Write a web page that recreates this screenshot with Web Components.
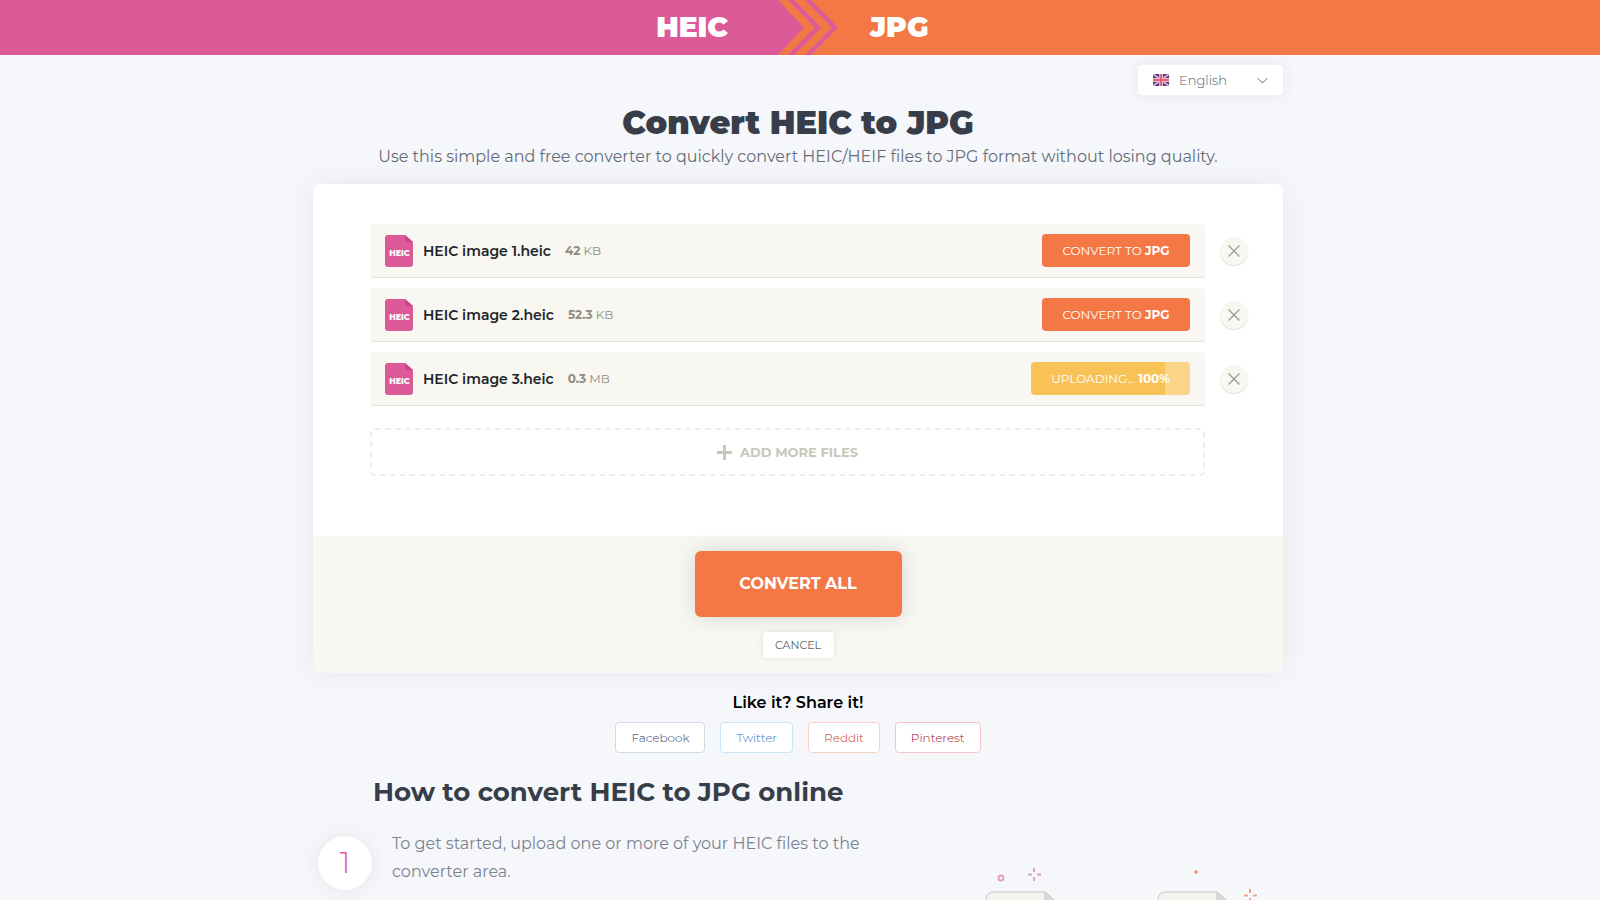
<!DOCTYPE html>
<html lang="en">
<head>
<meta charset="utf-8">
<meta name="viewport" content="width=device-width, initial-scale=1">
<title>Convert HEIC to JPG</title>
<style>
  html {
    background: #f5f7fb;
    overflow: hidden;
  }
  body {
    margin: 0;
    font-family: Montserrat, Inter, sans-serif;
    font-size: 16px;
    color: #373e4a;
  }
</style>
</head>
<body>
<format-banner>
  <span slot="from">HEIC</span>
  <span slot="to">JPG</span>
</format-banner>

<page-column>
  <language-picker></language-picker>
  <page-intro>
    <span slot="title">Convert HEIC to JPG</span>
    <span slot="text">Use this simple and free converter to quickly convert HEIC/HEIF files to JPG format without losing quality.</span>
  </page-intro>
  <converter-card>
    <file-row name="HEIC image 1.heic" size="42" unit="KB"></file-row>
    <file-row name="HEIC image 2.heic" size="52.3" unit="KB"></file-row>
    <file-row name="HEIC image 3.heic" size="0.3" unit="MB" progress="100"></file-row>
  </converter-card>
  <share-links></share-links>
  <how-to>
    <span slot="title">How to convert HEIC to JPG online</span>
    <how-step number="1">To get started, upload one or more of your HEIC files to the converter area.</how-step>
    <file-drawing slot="picture"></file-drawing>
  </how-to>
</page-column>

<script>
// Creates the shadow root and fills it
function render(element, html) {
  const root = element.attachShadow({ mode: "open" });
  const template = document.createElement("template");
  template.innerHTML = html;
  root.appendChild(template.content.cloneNode(true));
  return root;
}

class FormatBanner extends HTMLElement {
  constructor() {
    super();
    render(this, `
      <style>
        :host {
          display: grid;
          grid-template-columns: 1fr 60px 1fr;
          height: 55px;
          background: linear-gradient(90deg, #dd5a99 50%, #f47846 50%);
          color: #fff;
          font-size: 28px;
          font-weight: 900;
          line-height: 55px;
        }
        .from { padding-right: 42px; text-align: right; }
        .to { padding-left: 40px; }
        svg { display: block; overflow: visible; }
      </style>
      <div class="from"><slot name="from"></slot></div>
      <svg width="60" height="55" viewBox="0 0 60 55" aria-hidden="true">
        <rect width="60" height="55" fill="#f47846"/>
        <path d="M0 0H8L34 27.500L8 55H0Z" fill="#dd5a99"/>
        <path d="M18 0H24L51 27.500L24 55H18L45 27.500Z" fill="#dd5a99"/>
        <path d="M35 0H41L68 27.500L41 55H35L62 27.500Z" fill="#dd5a99"/>
      </svg>
      <div class="to"><slot name="to"></slot></div>
    `);
  }
}
customElements.define("format-banner", FormatBanner);

class PageColumn extends HTMLElement {
  constructor() {
    super();
    render(this, `
      <style>
        :host {
          display: block;
          max-width: 970px;
          margin: 0 auto;
          padding: 10px 4px 0 0;
        }
      </style>
      <slot></slot>
    `);
  }
}
customElements.define("page-column", PageColumn);

class LanguagePicker extends HTMLElement {
  constructor() {
    super();
    render(this, `
      <style>
        :host { display: flex; justify-content: flex-end; }
        label {
          display: flex;
          align-items: center;
          box-sizing: border-box;
          width: 145px;
          height: 30px;
          padding: 0 15px;
          border-radius: 4px;
          background: #fff;
          box-shadow: 0 0 15px rgba(50, 50, 60, .09);
        }
        select {
          flex: 1;
          min-width: 0;
          height: 30px;
          padding: 0 0 0 10px;
          border: 0;
          outline: 0;
          appearance: none;
          background: none;
          color: #525b70;
          font: 300 13px Montserrat, Inter, sans-serif;
        }
      </style>
      <label>
        <svg width="16" height="12" viewBox="0 0 16 12" aria-hidden="true">
          <rect width="16" height="12" fill="#3d3f86"/>
          <path d="M0 0L16 12M16 0L0 12" stroke="#dba6c0" stroke-width="2"/>
          <path d="M8 0V12M0 6H16" stroke="#eab4c6" stroke-width="4"/>
          <path d="M8 0V12M0 6H16" stroke="#e0667a" stroke-width="2"/>
        </svg>
        <select aria-label="Language"><option>English</option></select>
        <svg width="11" height="7" viewBox="0 0 11 7" fill="none" stroke="#5f687b" aria-hidden="true">
          <path d="M.5 1L5.500 6L10.500 1"/>
        </svg>
      </label>
    `);
  }
}
customElements.define("language-picker", LanguagePicker);

class PageIntro extends HTMLElement {
  constructor() {
    super();
    render(this, `
      <style>
        :host { display: block; padding: 8px 0 13px; text-align: center; }
        h1 { margin: 0; font-size: 32px; font-weight: 900; line-height: 40px; }
        p { margin: 0; color: #666d79; font-weight: 400; line-height: 28px; }
      </style>
      <h1><slot name="title"></slot></h1>
      <p><slot name="text"></slot></p>
    `);
  }
}
customElements.define("page-intro", PageIntro);

class ConverterCard extends HTMLElement {
  constructor() {
    super();
    render(this, `
      <style>
        :host {
          display: block;
          overflow: hidden;
          border-radius: 8px;
          background: #fff;
          box-shadow: 0 0 30px rgba(50, 50, 60, .08);
        }
        .files {
          display: flex;
          flex-direction: column;
          gap: 10px;
          padding: 40px 35px 60px 57px;
        }
        .add {
          display: flex;
          align-items: center;
          justify-content: center;
          gap: 8px;
          height: 48px;
          margin: 12px 43px 0 0;
          border: 2px dashed #efeeea;
          border-radius: 5px;
          background: none;
          color: #c9c7bc;
          font: 700 13px Montserrat, Inter, sans-serif;
        }
        .actions {
          display: flex;
          flex-direction: column;
          align-items: center;
          gap: 15px;
          padding: 15px 0;
          background: #f8f7f2;
        }
        .all {
          width: 207px;
          height: 66px;
          padding: 0 0 2px;
          border: 0;
          border-radius: 6px;
          background: #f47846;
          box-shadow: 0 0 20px rgba(60, 60, 40, .18);
          color: #fff;
          font: 700 16px Montserrat, Inter, sans-serif;
        }
        .cancel {
          width: 71px;
          height: 26px;
          padding: 0;
          border: 0;
          border-radius: 4px;
          background: #fff;
          box-shadow: 0 0 6px rgba(60, 60, 40, .1);
          color: #5b5f66;
          font: 400 11px Montserrat, Inter, sans-serif;
        }
      </style>
      <div class="files">
        <slot></slot>
        <button class="add" type="button">
          <svg width="15" height="15" viewBox="0 0 15 15" stroke="#c9c7bc" stroke-width="3" aria-hidden="true">
            <path d="M7.500 0V15M0 7.500H15"/>
          </svg>
          ADD MORE FILES
        </button>
      </div>
      <div class="actions">
        <button class="all" type="button">CONVERT ALL</button>
        <button class="cancel" type="button">CANCEL</button>
      </div>
    `);
  }
}
customElements.define("converter-card", ConverterCard);

class FileRow extends HTMLElement {
  connectedCallback() {
    if (this.shadowRoot) return;
    const name = this.getAttribute("name");
    const progress = this.getAttribute("progress");
    const button = progress
      ? `<button class="uploading" type="button">UPLOADING... <b>${progress}%</b></button>`
      : `<button class="convert" type="button">CONVERT TO <b>JPG</b></button>`;

    render(this, `
      <style>
        :host { display: flex; align-items: center; gap: 15px; }
        .file {
          display: flex;
          flex: 1;
          align-items: center;
          box-sizing: border-box;
          height: 54px;
          padding: 0 15px;
          border-bottom: 1px solid #dedfd5;
          border-radius: 4px;
          background: #f8f7f2;
        }
        .name { margin: 0 14px 0 10px; color: #20242b; font-size: 14px; font-weight: 600; }
        .size { flex: 1; color: #8f8d80; font-size: 12px; font-weight: 400; }
        b { font-weight: 700; }
        .file button {
          height: 33px;
          padding: 0;
          border: 0;
          border-radius: 4px;
          color: #fff;
          font: 400 12px Montserrat, Inter, sans-serif;
        }
        .convert { width: 148px; background: #f47846; }
        .uploading { width: 159px; background: linear-gradient(90deg, #f8c256 84%, #fad58a 84%); }
        .remove {
          display: flex;
          align-items: center;
          justify-content: center;
          width: 28px;
          height: 28px;
          padding: 0;
          border: 0;
          border-radius: 50%;
          background: #f8f7f2;
          box-shadow: 0 1px 1px #dedfd5;
        }
      </style>
      <div class="file">
        <svg width="28" height="32" viewBox="0 0 28 32" aria-hidden="true">
          <path d="M3 0H20L28 7V29Q28 32 25 32H3Q0 32 0 29V3Q0 0 3 0Z" fill="#dd5a99"/>
          <path d="M20 0L28 7H22Q20 7 20 5Z" fill="#c5478a"/>
          <text x="14.500" y="21" fill="#fff" font-size="8" font-weight="800" text-anchor="middle">HEIC</text>
        </svg>
        <span class="name">${name}</span>
        <span class="size"><b>${this.getAttribute("size")}</b> ${this.getAttribute("unit")}</span>
        ${button}
      </div>
      <button class="remove" type="button" aria-label="Remove ${name}">
        <svg width="12" height="12" viewBox="0 0 12 12" stroke="#99978a" stroke-width="1.200" aria-hidden="true">
          <path d="M.5.5L11.500 11.500M11.500.5L.5 11.500"/>
        </svg>
      </button>
    `);
  }
}
customElements.define("file-row", FileRow);

class ShareLinks extends HTMLElement {
  constructor() {
    super();
    render(this, `
      <style>
        :host { display: block; padding: 20px 0 25px; text-align: center; }
        h3 { margin: 0 0 9px; color: #000; font-size: 16px; font-weight: 600; line-height: 20px; }
        nav { display: flex; justify-content: center; gap: 15px; }
        a {
          padding: 0 15px;
          border: 1px solid;
          border-radius: 4px;
          background: #fff;
          font-size: 12px;
          font-weight: 300;
          line-height: 29px;
          text-decoration: none;
        }
        .facebook { border-color: #d2d8e8; color: #2c3b70; }
        .twitter { border-color: #cbe4f6; color: #2672bf; }
        .reddit { border-color: #f9d2c6; color: #b8331a; }
        .pinterest { border-color: #f4c6cc; color: #a30720; }
      </style>
      <h3>Like it? Share it!</h3>
      <nav>
        <a class="facebook" href="#facebook">Facebook</a>
        <a class="twitter" href="#twitter">Twitter</a>
        <a class="reddit" href="#reddit">Reddit</a>
        <a class="pinterest" href="#pinterest">Pinterest</a>
      </nav>
    `);
  }
}
customElements.define("share-links", ShareLinks);

class HowTo extends HTMLElement {
  constructor() {
    super();
    render(this, `
      <style>
        :host { display: block; }
        h2 { margin: 0 0 24px; padding-left: 60px; font-size: 26px; font-weight: 700; line-height: 28px; }
        .content { display: flex; justify-content: space-between; }
        .steps { flex: 0 1 570px; }
      </style>
      <h2><slot name="title"></slot></h2>
      <div class="content">
        <div class="steps"><slot></slot></div>
        <slot name="picture"></slot>
      </div>
    `);
  }
}
customElements.define("how-to", HowTo);

class HowStep extends HTMLElement {
  connectedCallback() {
    if (this.shadowRoot) return;
    render(this, `
      <style>
        :host { display: flex; gap: 20px; padding-left: 5px; }
        .number {
          flex: none;
          width: 54px;
          height: 54px;
          margin-top: 6px;
          border-radius: 50%;
          background: #fff;
          box-shadow: 0 0 20px rgba(50, 50, 60, .09);
          color: #dd5a99;
          font-size: 30px;
          font-weight: 300;
          line-height: 54px;
          text-align: center;
        }
        p { margin: 0; color: #7b8392; font-weight: 400; line-height: 28px; }
      </style>
      <div class="number">${this.getAttribute("number")}</div>
      <p><slot></slot></p>
    `);
  }
}
customElements.define("how-step", HowStep);

class FileDrawing extends HTMLElement {
  constructor() {
    super();
    render(this, `
      <style>
        :host { display: block; padding-top: 30px; }
        svg { display: block; }
      </style>
      <svg width="300" height="120" viewBox="0 0 300 120" fill="none" aria-hidden="true">
        <g stroke="#e3a0c2" stroke-width="2">
          <circle cx="18" cy="18" r="2.500"/>
          <path d="M51 8V12M51 17V21M45 14.500H49M54 14.500H58"/>
        </g>
        <circle cx="213" cy="12" r="1.700" fill="#f1936f"/>
        <path d="M267 29V33M267 38V42M261 35.500H265M270 35.500H274" stroke="#f1a184" stroke-width="2"/>
        <g stroke="#c9c9c1" fill="#f5f5f0">
          <path d="M3 120V40Q3 32 11 32H62L80 48V120"/>
          <path d="M62 32V48H80Z" fill="#d9dad5"/>
          <path d="M175 120V40Q175 32 183 32H234L252 48V120"/>
          <path d="M234 32V48H252Z" fill="#d9dad5"/>
        </g>
      </svg>
    `);
  }
}
customElements.define("file-drawing", FileDrawing);
</script>
</body>
</html>
